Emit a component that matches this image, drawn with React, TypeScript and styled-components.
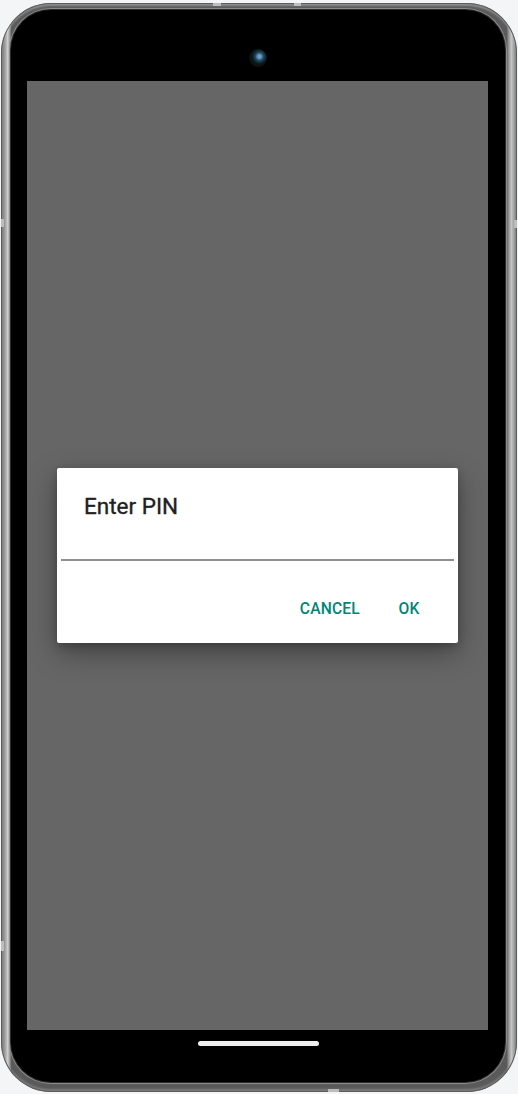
import React from "react";
import styled, { createGlobalStyle } from "styled-components";

const Global = createGlobalStyle`
  html, body { margin: 0; padding: 0; background: #f4f5f7; }
  body { font-family: Roboto, "Noto Sans", Arial, sans-serif; }
  * { box-sizing: border-box; }
`;

const Page = styled.div`
  width: 518px;
  height: 1094px;
  padding: 3px 1px 2px 1px;
  background: #f4f5f7;
`;

const Phone = styled.div`
  position: relative;
  width: 516px;
  height: 1089px;
  border-radius: 50px;
  padding: 7px 12px 10px 10px;
  background: linear-gradient(90deg, #6d6d6d 0%, #a0a0a0 0.8%, #cfcfcf 1.3%, #8a8a8a 1.8%, #5a5a5a 2%, #5a5a5a 98%, #8a8a8a 98.3%, #c6c6c6 98.9%, #9a9a9a 99.5%, #6a6a6a 100%);
  box-shadow: inset 0 0 0 1px #5c5c5c, inset 0 3px 2px rgba(255,255,255,0.3), inset 0 -3px 2px rgba(255,255,255,0.2);
`;

const Bezel = styled.div`
  width: 100%;
  height: 100%;
  border-radius: 40px;
  background: #000;
  display: flex;
  flex-direction: column;
  box-shadow: 0 0 0 1px #2a2a2a, 0 0 0 2px #8c8c8c;
`;

const TopBar = styled.div`
  height: 71px;
  display: flex;
  align-items: center;
  justify-content: center;
  padding-top: 25px;
`;

const Camera = styled.div`
  width: 18px;
  height: 18px;
  border-radius: 50%;
  background: radial-gradient(circle at 58% 42%, #6f9bd0 0 10%, #1d4a58 28%, #08171d 50%, #111 62%, #080808 100%);
`;

const Screen = styled.div`
  flex: 1;
  margin: 0 17px 0 16px;
  background: #666666;
  display: flex;
  align-items: center;
  justify-content: center;
`;

const BottomBar = styled.div`
  height: 52px;
  display: flex;
  justify-content: center;
  padding-top: 11px;
`;

const HomeIndicator = styled.div`
  width: 121px;
  height: 5px;
  border-radius: 3px;
  background: #eeeeee;
`;

const Dialog = styled.div`
  width: 401px;
  height: 175px;
  background: #ffffff;
  border-radius: 2px;
  box-shadow: 0 10px 28px rgba(0, 0, 0, 0.35), 0 3px 8px rgba(0, 0, 0, 0.2);
  display: flex;
  flex-direction: column;
  padding-top: 24px;
`;

const Title = styled.div`
  padding-left: 27px;
  height: 28px;
  line-height: 28px;
  font-family: Roboto, "Noto Sans", sans-serif;
  font-size: 22.5px;
  font-weight: 400;
  -webkit-text-stroke: 0.35px #212121;
  color: #212121;
`;

const Field = styled.div`
  margin: 0 4px;
  height: 41px;
  border-bottom: 2px solid #8f8f8f;
`;

const ButtonBar = styled.div`
  display: flex;
  justify-content: flex-end;
  gap: 4px;
  padding: 28px 13px 0 0;
`;

const TextButton = styled.button`
  min-width: 72px;
  height: 40px;
  padding: 0 9px;
  border: none;
  background: transparent;
  font-family: Roboto, "Noto Sans", sans-serif;
  font-size: 15.6px;
  font-weight: 500;
  letter-spacing: 0.2px;
  color: #008577;
  text-transform: uppercase;
  cursor: pointer;
`;

const SideKey = styled.div<{ $side: "left" | "right" | "top" | "bottom"; $at: number; $len: number }>`
  position: absolute;
  background: #bdbdbd;
  ${(p) =>
    p.$side === "left" || p.$side === "right"
      ? `top: ${p.$at}px; height: ${p.$len}px; width: 3px; ${p.$side}: 0;`
      : `left: ${p.$at}px; width: ${p.$len}px; height: 3px; ${p.$side}: 0;`}
`;

export default function App() {
  return (
    <Page>
      <Global />
      <Phone>
        <Bezel>
          <TopBar>
            <Camera />
          </TopBar>
          <Screen>
            <Dialog>
              <Title>Enter PIN</Title>
              <Field />
              <ButtonBar>
                <TextButton>Cancel</TextButton>
                <TextButton>OK</TextButton>
              </ButtonBar>
            </Dialog>
          </Screen>
          <BottomBar>
            <HomeIndicator />
          </BottomBar>
        </Bezel>
        <SideKey $side="left" $at={216} $len={8} />
        <SideKey $side="left" $at={938} $len={10} />
        <SideKey $side="right" $at={217} $len={8} />
        <SideKey $side="top" $at={212} $len={8} />
        <SideKey $side="top" $at={293} $len={7} />
        <SideKey $side="bottom" $at={327} $len={11} />
      </Phone>
    </Page>
  );
}
